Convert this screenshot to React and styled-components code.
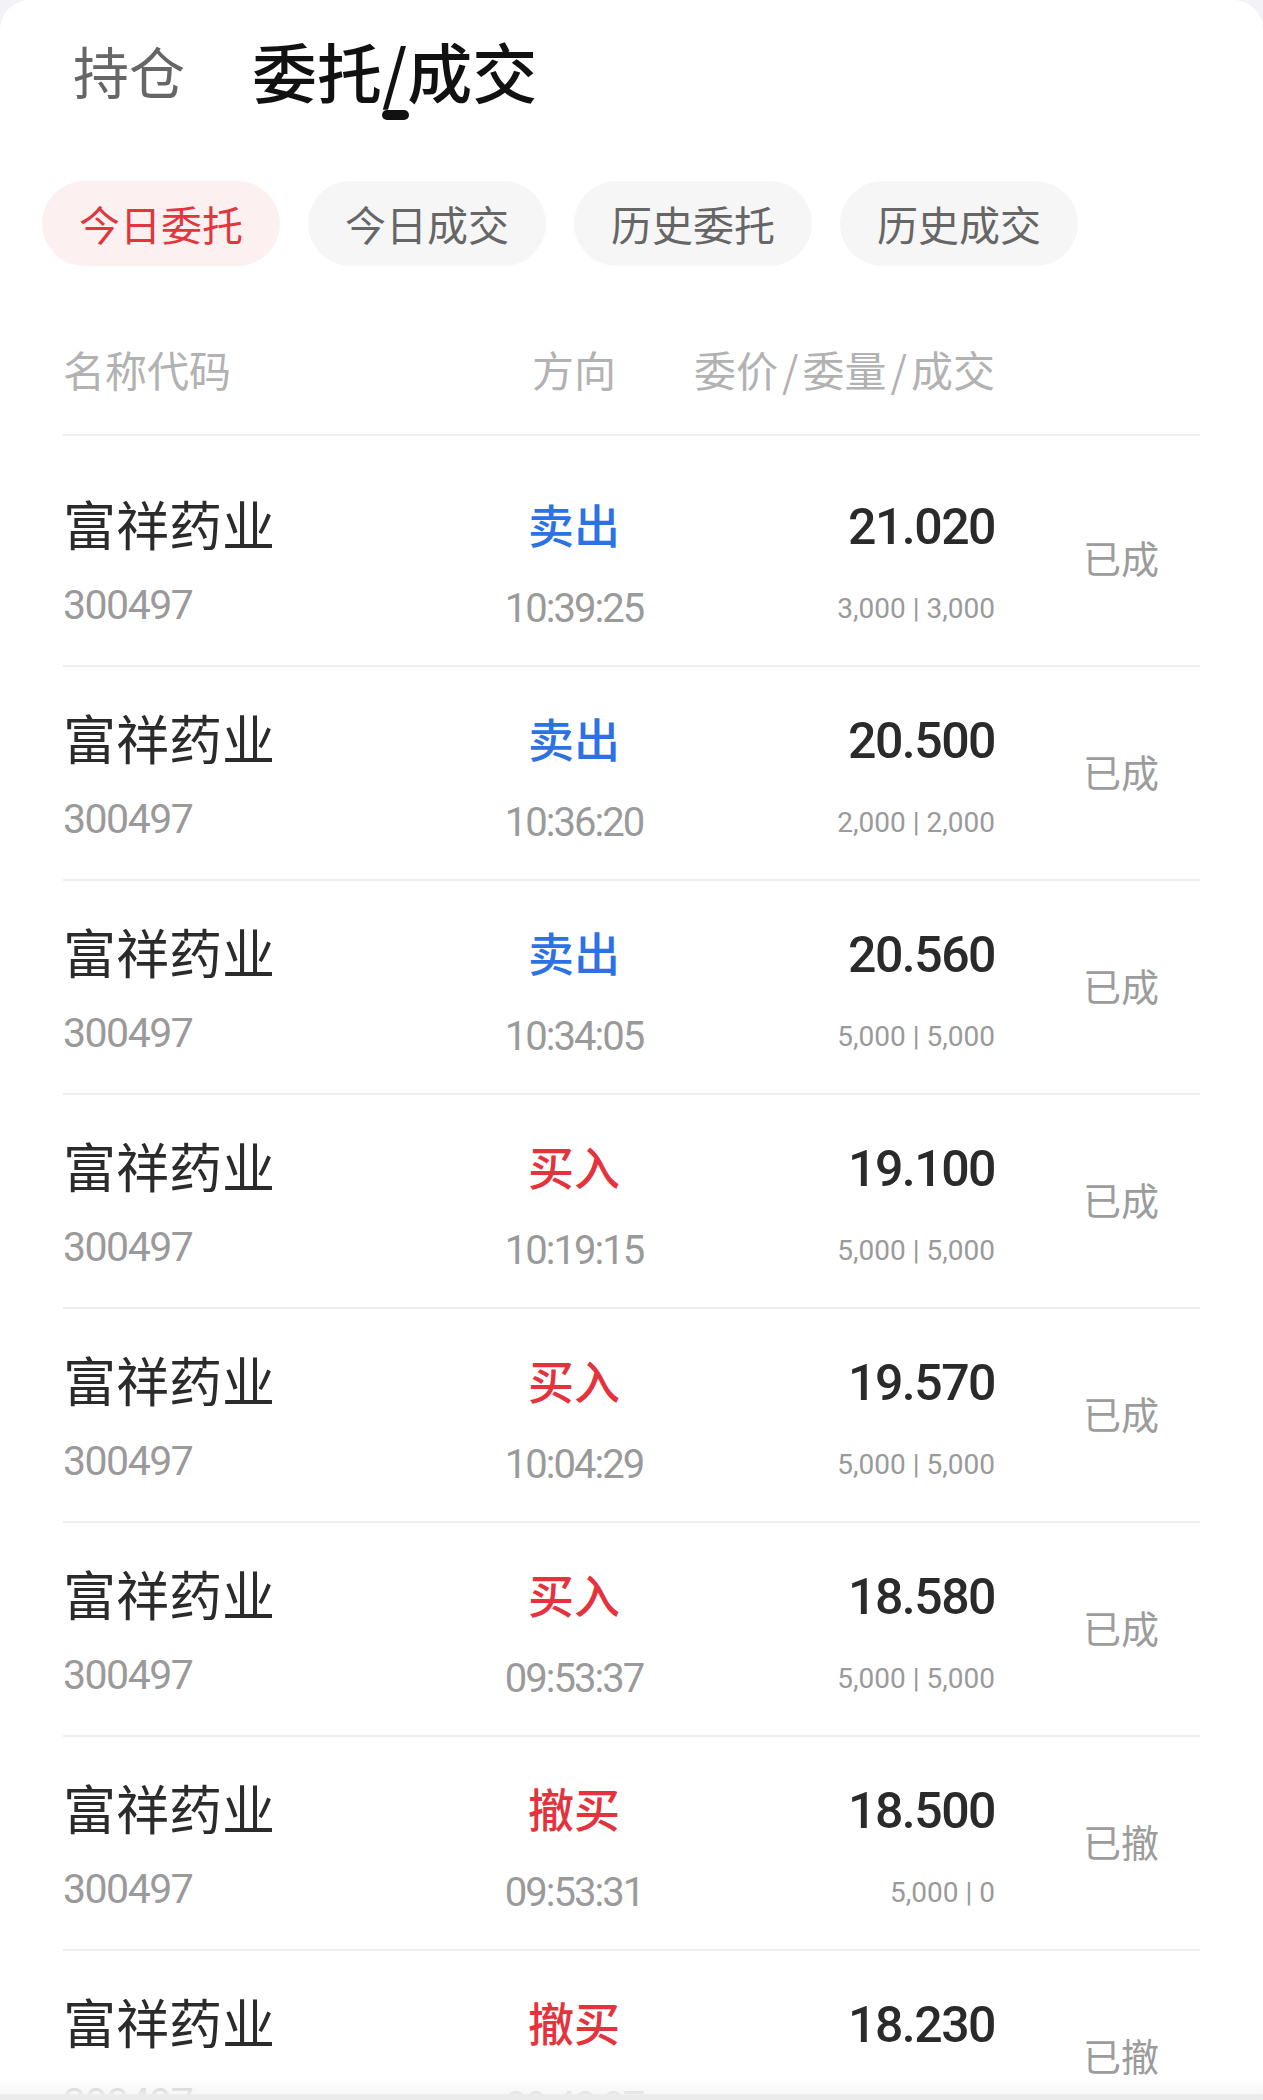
import React from "react";
import styled, { createGlobalStyle } from "styled-components";

const GlobalStyle = createGlobalStyle`
  html, body {
    margin: 0;
    padding: 0;
    background: #f3f3f7;
  }
  body {
    font-family: "Noto Sans CJK SC", "Noto Sans", sans-serif;
  }
`;

const orders = [
  { side: "sell", label: "卖出", time: "10:39:25", price: "21.020", qty: "3,000", done: "3,000", status: "已成" },
  { side: "sell", label: "卖出", time: "10:36:20", price: "20.500", qty: "2,000", done: "2,000", status: "已成" },
  { side: "sell", label: "卖出", time: "10:34:05", price: "20.560", qty: "5,000", done: "5,000", status: "已成" },
  { side: "buy", label: "买入", time: "10:19:15", price: "19.100", qty: "5,000", done: "5,000", status: "已成" },
  { side: "buy", label: "买入", time: "10:04:29", price: "19.570", qty: "5,000", done: "5,000", status: "已成" },
  { side: "buy", label: "买入", time: "09:53:37", price: "18.580", qty: "5,000", done: "5,000", status: "已成" },
  { side: "buy", label: "撤买", time: "09:53:31", price: "18.500", qty: "5,000", done: "0", status: "已撤" },
  { side: "buy", label: "撤买", time: "09:48:07", price: "18.230", qty: "5,000", done: "0", status: "已撤" },
];

const filters = ["今日委托", "今日成交", "历史委托", "历史成交"];

const App = () => {
  return (
    <Page>
      <GlobalStyle />
      <TitleBar>
        <TitleTab>持仓</TitleTab>
        <TitleTab $active>
          委托/成交
          <Indicator />
        </TitleTab>
      </TitleBar>

      <PillRow>
        {filters.map((f, i) => (
          <Pill key={f} $active={i === 0}>
            {f}
          </Pill>
        ))}
      </PillRow>

      <ListHead>
        <HeadCell>名称代码</HeadCell>
        <HeadCell $align="center">方向</HeadCell>
        <HeadCell $align="right">
          委价<Sep>/</Sep>委量<Sep>/</Sep>成交
        </HeadCell>
      </ListHead>

      <List>
        {orders.map((o, i) => (
          <Row key={i}>
            <Name>富祥药业</Name>
            <Side $side={o.side}>{o.label}</Side>
            <Price>{o.price}</Price>
            <Status>{o.status}</Status>
            <Code>300497</Code>
            <Time>{o.time}</Time>
            <Qty>
              {o.qty} | {o.done}
            </Qty>
          </Row>
        ))}
      </List>

      <BottomFade />
    </Page>
  );
};

const Page = styled.div`
  position: relative;
  width: 1263px;
  height: 2100px;
  overflow: hidden;
  background: #fff;
  border-radius: 30px 30px 0 0;
`;

const TitleBar = styled.div`
  display: flex;
  align-items: center;
  height: 140px;
  padding-left: 73px;
  gap: 67px;
`;

const TitleTab = styled.div`
  position: relative;
  font-size: ${(p) => (p.$active ? 65 : 56)}px;
  font-weight: ${(p) => (p.$active ? 500 : 400)};
  line-height: 1;
  color: ${(p) => (p.$active ? "#111111" : "#666666")};
`;

const Indicator = styled.span`
  position: absolute;
  left: 50%;
  bottom: -17px;
  width: 27px;
  height: 10px;
  margin-left: -13px;
  border-radius: 5px;
  background: #111111;
`;

const PillRow = styled.div`
  display: flex;
  gap: 28px;
  padding-left: 42px;
  margin-top: 41px;
`;

const Pill = styled.div`
  height: 85px;
  padding: 0 37px;
  border-radius: 43px;
  font-size: 41px;
  line-height: 85px;
  background: ${(p) => (p.$active ? "#fdf0f0" : "#f6f6f6")};
  color: ${(p) => (p.$active ? "#e2363e" : "#666666")};
`;

const columns = "426px 170px 336px 1fr";

const ListHead = styled.div`
  display: grid;
  grid-template-columns: ${columns};
  margin: 0 63px;
  padding: 79px 0 41px;
  border-bottom: 2px solid #efefef;
  font-size: 42px;
  line-height: 48px;
  color: #b2b2b2;
`;

const HeadCell = styled.div`
  text-align: ${(p) => p.$align || "left"};
  white-space: nowrap;
`;

const Sep = styled.span`
  padding: 0 4px;
`;

const List = styled.div`
  margin: 0 63px;
  padding-top: 17px;
`;

const Row = styled.div`
  display: grid;
  grid-template-columns: ${columns};
  grid-template-rows: 66px 66px;
  row-gap: 16px;
  padding: 37px 0 27px;
  border-bottom: 2px solid #efefef;
`;

const Name = styled.div`
  grid-column: 1;
  grid-row: 1;
  align-self: center;
  font-size: 53px;
  line-height: 1;
  color: #2b2b2b;
`;

const Side = styled.div`
  grid-column: 2;
  grid-row: 1;
  align-self: center;
  text-align: center;
  font-size: 46px;
  font-weight: 500;
  line-height: 1;
  color: ${(p) => (p.$side === "sell" ? "#2d72e3" : "#e4333c")};
`;

const Num = styled.div`
  font-family: Roboto, "Liberation Sans", sans-serif;
  line-height: 1;
  align-self: center;
`;

const Price = styled(Num)`
  grid-column: 3;
  grid-row: 1;
  margin-top: 7px;
  text-align: right;
  font-size: 50px;
  font-weight: 500;
  letter-spacing: -1.5px;
  color: #2a2a2a;
`;

const Code = styled(Num)`
  grid-column: 1;
  grid-row: 2;
  font-size: 41px;
  letter-spacing: -1.5px;
  color: #9a9a9a;
`;

const Time = styled(Num)`
  grid-column: 2;
  grid-row: 2;
  margin-top: 7px;
  text-align: center;
  font-size: 40px;
  letter-spacing: -2px;
  color: #9a9a9a;
`;

const Qty = styled(Num)`
  grid-column: 3;
  grid-row: 2;
  margin-top: 8px;
  text-align: right;
  font-size: 28px;
  color: #9a9a9a;
  white-space: nowrap;
`;

const Status = styled.div`
  grid-column: 4;
  grid-row: 1 / 3;
  align-self: center;
  margin-bottom: 14px;
  padding-left: 88px;
  font-size: 38px;
  line-height: 1;
  color: #9c9c9c;
`;

const BottomFade = styled.div`
  position: absolute;
  left: 0;
  right: 0;
  bottom: 0;
  height: 22px;
  background: linear-gradient(
    to bottom,
    rgba(255, 255, 255, 0.4) 0%,
    rgba(246, 246, 246, 0.85) 70%,
    #ebebeb 78%,
    #ebebeb 100%
  );
`;

export default App;
